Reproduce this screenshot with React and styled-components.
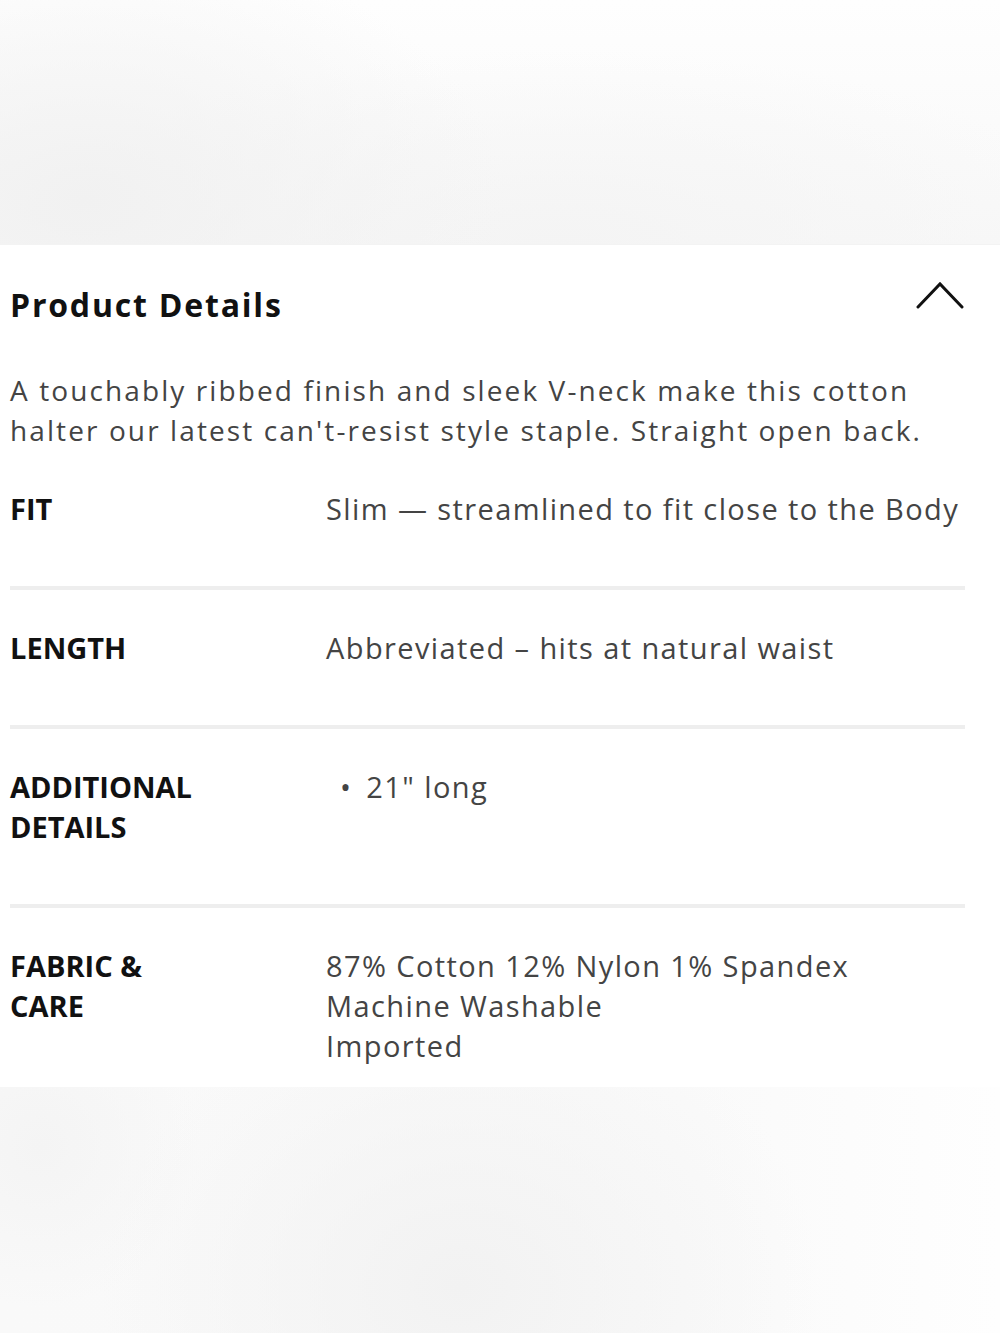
import React from "react";
import styled, { createGlobalStyle } from "styled-components";

const Global = createGlobalStyle`
  html, body { margin: 0; padding: 0; background: #ffffff; }
  body { font-family: "Open Sans", "Noto Sans", sans-serif; -webkit-font-smoothing: antialiased; }
  * { box-sizing: border-box; }
`;

const Page = styled.div`
  width: 1000px;
  min-height: 1333px;
  display: flex;
  flex-direction: column;
  background: #ffffff;
`;

const TopBand = styled.div`
  height: 245px;
  background:
    radial-gradient(ellipse 420px 260px at 85px 200px, #f1f1f1 0%, rgba(241,241,241,0) 100%),
    radial-gradient(ellipse 560px 200px at 560px 250px, #f4f4f4 0%, rgba(244,244,244,0) 100%),
    linear-gradient(180deg, #fefefe 0%, #f8f8f8 100%);
  border-bottom: 1px solid #f3f3f3;
`;

const BottomBand = styled.div`
  flex: 1;
  min-height: 245px;
  background:
    radial-gradient(ellipse 360px 300px at 460px 200px, #f2f2f2 0%, rgba(242,242,242,0) 100%),
    radial-gradient(ellipse 160px 160px at 40px 60px, #f4f4f4 0%, rgba(244,244,244,0) 100%),
    linear-gradient(90deg, #f9f9f9 0%, #fafafa 70%, #fefefe 100%);
`;

const Panel = styled.section`
  background: #ffffff;
  padding: 40px 35px 0 10px;
`;

const Header = styled.div`
  display: flex;
  justify-content: space-between;
  align-items: flex-start;
  height: 40px;
`;

const Title = styled.h2`
  margin: 0;
  font-size: 32px;
  line-height: 40px;
  font-weight: 700;
  color: #111111;
  letter-spacing: 1.8px;
`;

const Chevron = styled.svg`
  display: block;
  margin-top: -5px;
  margin-right: 1px;
`;

const Description = styled.p`
  margin: 46px 0 1px;
  font-size: 28px;
  line-height: 39.5px;
  color: #444444;
  letter-spacing: 2.1px;
  font-weight: 400;
`;

const Row = styled.div`
  display: grid;
  grid-template-columns: 316px 1fr;
  padding: 38px 0 ${(p) => (p.$last ? "21px" : "57px")};
  border-bottom: ${(p) => (p.$last ? "none" : "4px solid #eeeeee")};
`;

const Label = styled.div`
  max-width: 200px;
  font-size: 29px;
  line-height: 40px;
  font-weight: 700;
  color: #111111;
  letter-spacing: 0px;
`;

const Value = styled.div`
  font-size: 29px;
  line-height: 40px;
  font-weight: 400;
  color: #444444;
  letter-spacing: 1.4px;
  white-space: nowrap;
`;

const Bullets = styled.ul`
  margin: 0;
  padding: 0 0 0 14px;
  list-style: none;
`;

const Bullet = styled.li`
  display: flex;
  gap: 14px;
  &::before {
    content: "•";
  }
`;

const rows = [
  { label: "FIT", value: ["Slim — streamlined to fit close to the Body"] },
  { label: "LENGTH", value: ["Abbreviated – hits at natural waist"] },
  { label: "ADDITIONAL DETAILS", bullets: ["21\" long"] },
  {
    label: "FABRIC & CARE",
    value: ["87% Cotton 12% Nylon 1% Spandex", "Machine Washable", "Imported"],
  },
];

export default function App() {
  return (
    <Page>
      <Global />
      <TopBand />
      <Panel>
        <Header>
          <Title>Product Details</Title>
          <Chevron width="48" height="30" viewBox="0 0 48 30" fill="none">
            <polyline
              points="2,27 24,4 46,27"
              stroke="#111"
              strokeWidth="3"
              strokeLinecap="round"
              strokeLinejoin="miter"
            />
          </Chevron>
        </Header>
        <Description>
          A touchably ribbed finish and sleek V-neck make this cotton halter our latest can't-resist style staple. Straight open back.
        </Description>
        {rows.map((r, i) => (
          <Row key={r.label} $last={i === rows.length - 1}>
            <Label>{r.label}</Label>
            <Value>
              {r.bullets ? (
                <Bullets>
                  {r.bullets.map((b) => (
                    <Bullet key={b}>{b}</Bullet>
                  ))}
                </Bullets>
              ) : (
                r.value.map((v) => <div key={v}>{v}</div>)
              )}
            </Value>
          </Row>
        ))}
      </Panel>
      <BottomBand />
    </Page>
  );
}
